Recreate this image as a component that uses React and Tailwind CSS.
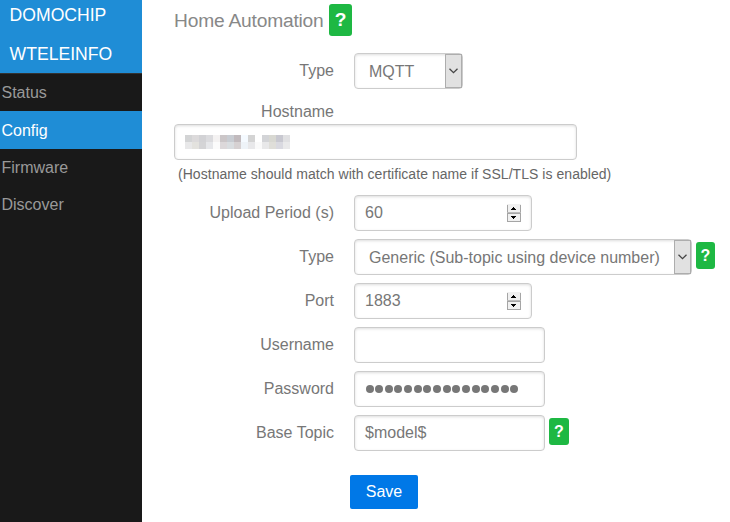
import React from 'react';

const MASK_TOP = ['#d3d4d5', '#dcdadb', '#d2d2d5', '#dbdbde', '#f4f2f2', '#cbc6c8', '#c8ccd2', '#c1babd', '#f5faff', '#d4d4d4', '#ffffff', '#d3d4d7', '#d8d8d2', '#c8c8d0', '#e0e0e2'];
const MASK_BOTTOM = ['#e8e8e9', '#e3e2de', '#d4d4d6', '#e6e7ea', '#fbfbfb', '#dcd8da', '#d9dde0', '#d6d1d2', '#eef3f8', '#e8e8ea', '#fafafa', '#e8e8e9', '#dfded9', '#d9d9e0', '#e9e9ea'];

function Badge({ className }) {
  return (
    <span className={`flex shrink-0 items-center justify-center rounded-[3px] bg-[#1eb843] font-bold text-white ${className}`}>
      ?
    </span>
  );
}

function Box({ className = '', children }) {
  return (
    <div className={`flex h-9 shrink-0 items-center rounded-[4px] border border-[#ccc] bg-white shadow-[inset_0_1px_3px_#ddd] ${className}`}>
      {children}
    </div>
  );
}

function Row({ label, children }) {
  return (
    <div className="mb-2 flex h-9">
      <label className="mr-5 w-40 shrink-0 text-right leading-9">{label}</label>
      {children}
    </div>
  );
}

function Select({ className, children }) {
  return (
    <Box className={`justify-between pl-[14px] ${className}`}>
      <span className="pt-[2px] whitespace-nowrap">{children}</span>
      <span className="flex h-[34px] w-[17px] items-center justify-center border border-[#adadad] bg-[#e1e1e1]">
        <svg width="9" height="6" viewBox="0 0 9 6" fill="none" stroke="#444" strokeWidth="1.3">
          <path d="M0.5 0.8 4.5 4.6 8.5 0.8" />
        </svg>
      </span>
    </Box>
  );
}

function NumberBox({ children }) {
  return (
    <Box className="w-[178px] justify-between pr-[10px] pl-[10px]">
      <span>{children}</span>
      <svg width="14" height="18" viewBox="0 0 14 18" shapeRendering="crispEdges">
        <rect width="14" height="18" fill="#f0f0f0" />
        <path d="M0.5 1V17.5H13.5V1M0 9.5H14" fill="none" stroke="#a5a5a5" />
        <path d="M0 8.5H14" stroke="#bbb" />
        <path d="M6 3h1v1h1v1h1v1H4V5h1V4h1zM4 12h5v1H8v1H7v1H6v-1H5v-1H4z" fill="#000" />
      </svg>
    </Box>
  );
}

export default function App() {
  return (
    <div className="flex h-[522px] w-[730px] overflow-hidden bg-white font-['Liberation_Sans',Arial,sans-serif] text-base text-[#777]">
      <nav className="w-[142px] shrink-0 bg-[#191919] text-[#999]">
        <div className="h-[74px] border-b border-[#333] bg-[#1f8dd6] pl-[9.6px] text-[17.6px] text-white">
          <div className="h-[35px] leading-[31px]">DOMOCHIP</div>
          <div className="h-[38px] leading-[39px]">WTELEINFO</div>
        </div>
        <div className="h-[37px] pl-[1.5px] leading-[37px]">Status</div>
        <div className="h-[38px] bg-[#1f8dd6] pl-[1.5px] leading-[39px] text-white">Config</div>
        <div className="h-[37px] pl-[1.5px] leading-[37px]">Firmware</div>
        <div className="h-[37px] pl-[1.5px] leading-[37px]">Discover</div>
      </nav>
      <main className="flex-1 pt-1 pl-8">
        <div className="mb-[17px] flex h-8">
          <h2 className="w-[155px] text-[19.2px] leading-[34px] tracking-[-0.2px] whitespace-nowrap text-[#888]">Home Automation</h2>
          <Badge className="h-8 w-[23px] text-[19.2px]" />
        </div>
        <Row label="Type"><Select className="w-[109px]">MQTT</Select></Row>
        <label className="block h-[27px] w-40 text-right leading-[30px]">Hostname</label>
        <Box className="w-[403px] pl-[10px]">
          <div className="grid grid-cols-[repeat(15,7px)] grid-rows-[7px_7px]">
            {[...MASK_TOP, ...MASK_BOTTOM].map((color, i) => (
              <span key={i} style={{ backgroundColor: color }} />
            ))}
          </div>
        </Box>
        <div className="h-[35px] pl-1 text-sm leading-[28px] tracking-[0.045px] text-[#666]">
          (Hostname should match with certificate name if SSL/TLS is enabled)
        </div>
        <Row label="Upload Period (s)"><NumberBox>60</NumberBox></Row>
        <Row label="Type">
          <Select className="w-[338px]">Generic (Sub-topic using device number)</Select>
          <Badge className="mt-[3px] ml-1 h-[27px] w-[19px]" />
        </Row>
        <Row label="Port"><NumberBox>1883</NumberBox></Row>
        <Row label="Username"><Box className="w-[191px]" /></Row>
        <Row label="Password">
          <Box className="w-[191px] pl-[10.5px]">
            <div className="flex gap-[1.67px]">
              {Array.from({ length: 16 }, (_, i) => (
                <span key={i} className="size-2 rounded-full bg-[#777]" />
              ))}
            </div>
          </Box>
        </Row>
        <Row label="Base Topic">
          <Box className="w-[191px] pl-[10px]">$model$</Box>
          <Badge className="mt-[3px] ml-1 h-[27px] w-5" />
        </Row>
        <button className="mt-6 ml-44 block h-[34px] w-[68px] rounded-[2px] bg-[#0078e7] text-white">Save</button>
      </main>
    </div>
  );
}
